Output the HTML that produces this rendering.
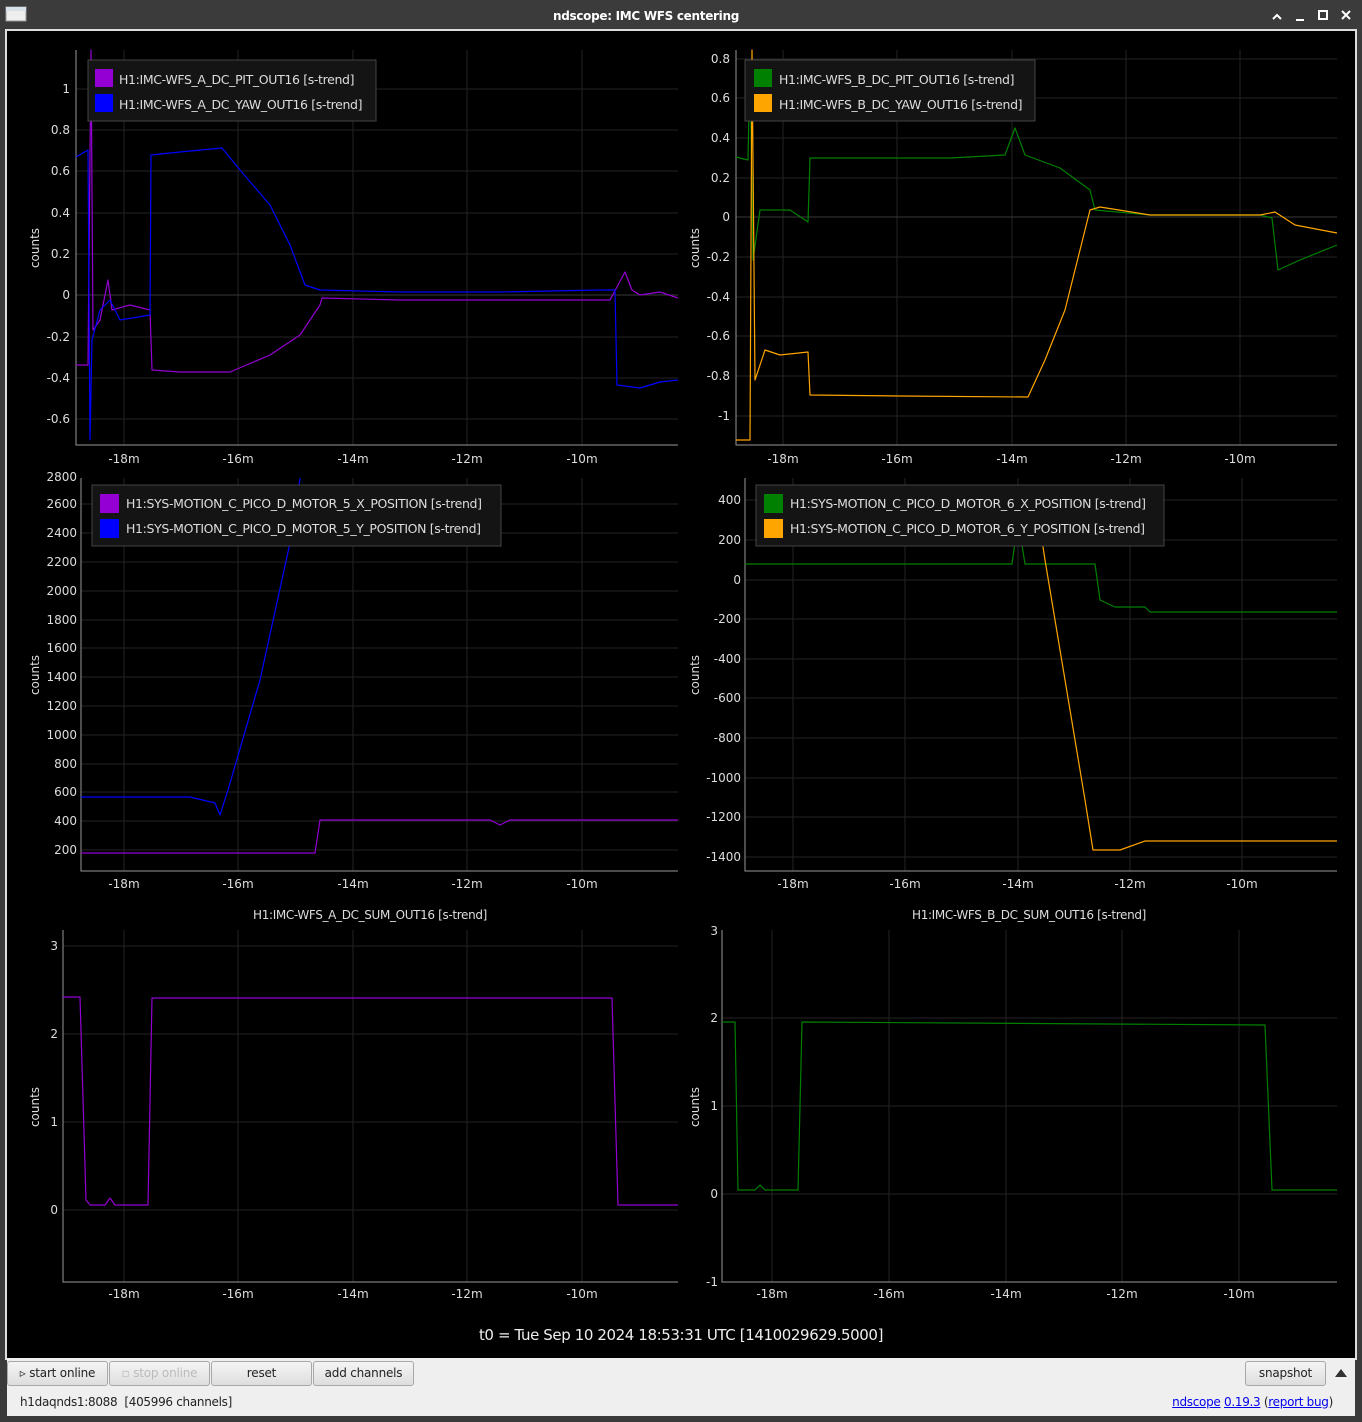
<!DOCTYPE html><html><head><style>
body{margin:0;width:1362px;height:1422px;background:#3a3a3a;overflow:hidden;font-family:"DejaVu Sans","Liberation Sans",sans-serif}
svg text{font-family:"DejaVu Sans","Liberation Sans",sans-serif}
.btn{position:absolute;top:1361px;height:23px;background:linear-gradient(#f4f4f4,#dedede);border:1px solid #a8a8a8;border-radius:3px;font-size:12px;text-align:center;line-height:23px;color:#222;letter-spacing:-0.2px}
</style></head><body>
<svg width="1362" height="1422" style="position:absolute;left:0;top:0">
<rect x="0" y="0" width="1362" height="30" fill="#3b3b3b"/>
<rect x="6" y="7" width="20" height="14" fill="#eee" stroke="#999"/><rect x="6" y="7" width="20" height="4" fill="#d8e0ea"/>
<text x="646" y="20" fill="#fff" font-size="12" font-weight="bold" text-anchor="middle" letter-spacing="-0.3">ndscope: IMC WFS centering</text>
<path d="M1273 19l4-4 4 4M1296 20h8M1319 11h8v8h-8zM1342 11l8 8M1350 11l-8 8" stroke="#fff" stroke-width="2" fill="none"/>
<rect x="5" y="29" width="1352" height="1331" fill="#ddd"/>
<rect x="7" y="31" width="1348" height="1327" fill="#000"/>
<rect x="7" y="1358" width="1348" height="58" fill="#efefef"/>
<g stroke="#232323" stroke-width="1">
<path d="M124 50V445M238 50V445M353 50V445M467 50V445M582 50V445M76 89H678M76 130H678M76 171H678M76 213H678M76 254H678M76 295H678M76 337H678M76 378H678M76 419H678"/>
<path d="M783 50V445M897 50V445M1012 50V445M1126 50V445M1240 50V445M736 59H1337M736 98H1337M736 138H1337M736 178H1337M736 217H1337M736 257H1337M736 297H1337M736 336H1337M736 376H1337M736 416H1337"/>
<path d="M124 478V871M238 478V871M353 478V871M467 478V871M582 478V871M81 504H678M81 533H678M81 562H678M81 591H678M81 620H678M81 648H678M81 677H678M81 706H678M81 735H678M81 764H678M81 792H678M81 821H678M81 850H678"/>
<path d="M793 478V871M905 478V871M1018 478V871M1130 478V871M1242 478V871M745 500H1337M745 540H1337M745 580H1337M745 619H1337M745 659H1337M745 698H1337M745 738H1337M745 778H1337M745 817H1337M745 857H1337"/>
<path d="M124 930V1282M238 930V1282M353 930V1282M467 930V1282M582 930V1282M63 946H678M63 1034H678M63 1122H678M63 1210H678"/>
<path d="M772 930V1282M889 930V1282M1006 930V1282M1122 930V1282M1239 930V1282M722 1018H1337M722 1106H1337M722 1194H1337"/>
</g>
<g stroke="#3a3a3a"><path d="M76 295H678M736 217H1337"/></g>
<g stroke="#999" fill="none">
<path d="M76 50V445H678M736 50V445H1337M81 478V871H678M745 478V871H1337M63 930V1282H678M722 930V1282H1337"/>
</g>
<g fill="none" stroke-width="1.2" stroke-linejoin="round">
<polyline stroke="#9400d3" points="76,365 88,365 91,50 93,330 100,320 108,280 112,310 130,305 150,310 152,370 180,372 230,372 270,355 300,335 320,305 322,298 400,300 500,300 610,300 618,285 625,272 632,290 640,295 660,292 678,298"/>
<polyline stroke="#0000ff" points="76,157 88,150 90,440 92,340 100,310 110,300 120,320 150,315 151,155 180,152 222,148 240,170 270,205 290,245 305,285 320,290 400,292 500,292 600,290 615,290 617,385 640,388 660,382 678,380"/>
<polyline stroke="#008000" points="736,157 748,160 750,60 753,260 760,210 790,210 808,222 810,158 850,158 950,158 1005,155 1015,128 1025,155 1060,168 1090,190 1095,210 1150,215 1260,215 1272,218 1278,270 1300,260 1337,245"/>
<polyline stroke="#ffa500" points="736,440 750,440 752,50 755,380 765,350 780,355 808,352 810,395 900,396 1028,397 1045,360 1065,310 1080,250 1090,210 1100,207 1150,215 1260,215 1275,212 1295,225 1337,233"/>
<polyline stroke="#9400d3" points="81,853 315,853 320,820 490,820 500,825 510,820 678,820"/>
<polyline stroke="#0000ff" points="81,797 190,797 215,803 220,815 228,790 260,680 295,520 300,478"/>
<polyline stroke="#008000" points="745,564 1012,564 1018,520 1025,564 1095,564 1100,600 1115,607 1145,607 1150,612 1337,612"/>
<polyline stroke="#ffa500" points="1030,520 1035,495 1045,560 1060,650 1075,740 1085,800 1093,850 1120,850 1145,841 1337,841"/>
<polyline stroke="#9400d3" points="63,997 80,997 86,1200 90,1205 105,1205 110,1198 115,1205 148,1205 152,998 612,998 618,1205 678,1205"/>
<polyline stroke="#008000" points="722,1022 735,1022 738,1190 755,1190 760,1185 765,1190 798,1190 802,1022 1265,1025 1272,1190 1337,1190"/>
</g>
<g fill="#141414" stroke="#444"><rect x="88" y="60" width="288" height="61"/><rect x="745" y="60" width="290" height="61"/><rect x="92" y="485" width="409" height="61"/><rect x="756" y="485" width="408" height="61"/></g>
<rect x="95" y="69" width="18" height="18" fill="#9400d3"/><rect x="95" y="94" width="18" height="18" fill="#0000ff"/>
<rect x="754" y="69" width="18" height="18" fill="#008000"/><rect x="754" y="94" width="18" height="18" fill="#ffa500"/>
<rect x="100" y="494" width="19" height="19" fill="#9400d3"/><rect x="100" y="519" width="19" height="19" fill="#0000ff"/>
<rect x="764" y="494" width="19" height="19" fill="#008000"/><rect x="764" y="519" width="19" height="19" fill="#ffa500"/>
<g fill="#ddd" font-size="12.5" letter-spacing="-0.35">
<text x="119" y="84">H1:IMC-WFS_A_DC_PIT_OUT16 [s-trend]</text><text x="119" y="109">H1:IMC-WFS_A_DC_YAW_OUT16 [s-trend]</text>
<text x="779" y="84">H1:IMC-WFS_B_DC_PIT_OUT16 [s-trend]</text><text x="779" y="109">H1:IMC-WFS_B_DC_YAW_OUT16 [s-trend]</text>
<text x="126" y="508">H1:SYS-MOTION_C_PICO_D_MOTOR_5_X_POSITION [s-trend]</text><text x="126" y="533">H1:SYS-MOTION_C_PICO_D_MOTOR_5_Y_POSITION [s-trend]</text>
<text x="790" y="508">H1:SYS-MOTION_C_PICO_D_MOTOR_6_X_POSITION [s-trend]</text><text x="790" y="533">H1:SYS-MOTION_C_PICO_D_MOTOR_6_Y_POSITION [s-trend]</text>
<text x="370" y="919" text-anchor="middle" font-size="12">H1:IMC-WFS_A_DC_SUM_OUT16 [s-trend]</text>
<text x="1029" y="919" text-anchor="middle" font-size="12">H1:IMC-WFS_B_DC_SUM_OUT16 [s-trend]</text>
</g>
<g fill="#ddd" font-size="12" text-anchor="middle">
<text x="124" y="463">-18m</text><text x="238" y="463">-16m</text><text x="353" y="463">-14m</text><text x="467" y="463">-12m</text><text x="582" y="463">-10m</text>
<text x="783" y="463">-18m</text><text x="897" y="463">-16m</text><text x="1012" y="463">-14m</text><text x="1126" y="463">-12m</text><text x="1240" y="463">-10m</text>
<text x="124" y="888">-18m</text><text x="238" y="888">-16m</text><text x="353" y="888">-14m</text><text x="467" y="888">-12m</text><text x="582" y="888">-10m</text>
<text x="793" y="888">-18m</text><text x="905" y="888">-16m</text><text x="1018" y="888">-14m</text><text x="1130" y="888">-12m</text><text x="1242" y="888">-10m</text>
<text x="124" y="1298">-18m</text><text x="238" y="1298">-16m</text><text x="353" y="1298">-14m</text><text x="467" y="1298">-12m</text><text x="582" y="1298">-10m</text>
<text x="772" y="1298">-18m</text><text x="889" y="1298">-16m</text><text x="1006" y="1298">-14m</text><text x="1122" y="1298">-12m</text><text x="1239" y="1298">-10m</text>
</g>
<g fill="#ddd" font-size="12" text-anchor="end">
<text x="70" y="93">1</text><text x="70" y="134">0.8</text><text x="70" y="175">0.6</text><text x="70" y="217">0.4</text><text x="70" y="258">0.2</text><text x="70" y="299">0</text><text x="70" y="341">-0.2</text><text x="70" y="382">-0.4</text><text x="70" y="423">-0.6</text>
<text x="730" y="63">0.8</text><text x="730" y="102">0.6</text><text x="730" y="142">0.4</text><text x="730" y="182">0.2</text><text x="730" y="221">0</text><text x="730" y="261">-0.2</text><text x="730" y="301">-0.4</text><text x="730" y="340">-0.6</text><text x="730" y="380">-0.8</text><text x="730" y="420">-1</text>
<text x="77" y="481">2800</text><text x="77" y="508">2600</text><text x="77" y="537">2400</text><text x="77" y="566">2200</text><text x="77" y="595">2000</text><text x="77" y="624">1800</text><text x="77" y="652">1600</text><text x="77" y="681">1400</text><text x="77" y="710">1200</text><text x="77" y="739">1000</text><text x="77" y="768">800</text><text x="77" y="796">600</text><text x="77" y="825">400</text><text x="77" y="854">200</text>
<text x="741" y="504">400</text><text x="741" y="544">200</text><text x="741" y="584">0</text><text x="741" y="623">-200</text><text x="741" y="663">-400</text><text x="741" y="702">-600</text><text x="741" y="742">-800</text><text x="741" y="782">-1000</text><text x="741" y="821">-1200</text><text x="741" y="861">-1400</text>
<text x="58" y="950">3</text><text x="58" y="1038">2</text><text x="58" y="1126">1</text><text x="58" y="1214">0</text>
<text x="718" y="935">3</text><text x="718" y="1022">2</text><text x="718" y="1110">1</text><text x="718" y="1198">0</text><text x="718" y="1286">-1</text>
</g>
<g fill="#ddd" font-size="12" text-anchor="middle">
<text transform="translate(39,248) rotate(-90)">counts</text><text transform="translate(699,248) rotate(-90)">counts</text>
<text transform="translate(39,675) rotate(-90)">counts</text><text transform="translate(699,675) rotate(-90)">counts</text>
<text transform="translate(39,1107) rotate(-90)">counts</text><text transform="translate(699,1107) rotate(-90)">counts</text>
</g>
<text x="681" y="1340" fill="#eee" font-size="15" text-anchor="middle" letter-spacing="-0.4">t0 = Tue Sep 10 2024 18:53:31 UTC [1410029629.5000]</text>
<path d="M1335 1377l6-8 6 8z" fill="#333"/>
</svg>
<div class="btn" style="left:7px;width:99px">▹ start online</div>
<div class="btn" style="left:109px;width:99px;color:#bbb">▫ stop online</div>
<div class="btn" style="left:211px;width:99px">reset</div>
<div class="btn" style="left:313px;width:99px">add channels</div>
<div class="btn" style="left:1245px;width:79px">snapshot</div>
<div style="position:absolute;left:20px;top:1395px;font-size:12px;color:#222;letter-spacing:-0.3px">h1daqnds1:8088&nbsp; [405996 channels]</div>
<div style="position:absolute;right:29px;top:1395px;font-size:12px;color:#222;letter-spacing:-0.3px"><u style="color:#00e">ndscope</u> <u style="color:#00e">0.19.3</u> (<u style="color:#00e">report bug</u>)</div>
</body></html>
